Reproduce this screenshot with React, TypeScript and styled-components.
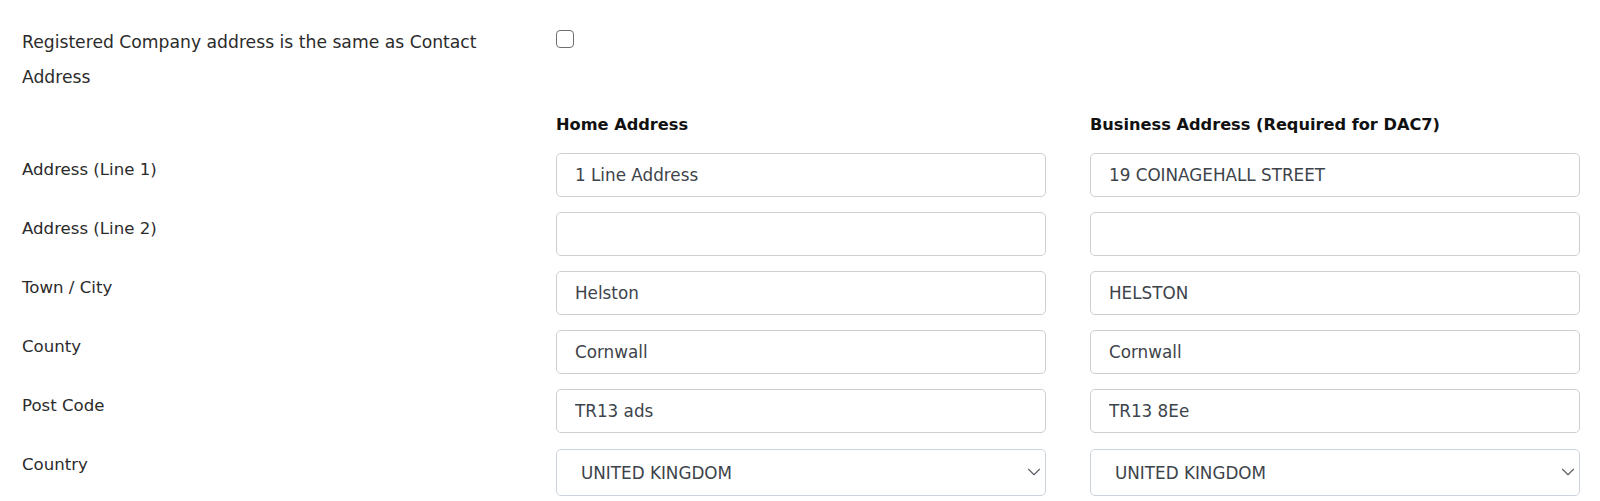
import React from "react";
import styled, { createGlobalStyle } from "styled-components";
import { ChevronDown } from "lucide-react";

const GlobalStyle = createGlobalStyle`
  html, body { margin: 0; padding: 0; background: #ffffff; }
  body { font-family: "DejaVu Sans", "Liberation Sans", sans-serif; color: #212529; }
  * { box-sizing: border-box; }
`;

const Page = styled.div`
  padding: 25px 20px 0 22px;
  width: 1600px;
`;

const Grid = styled.div<{ $rowGap?: number }>`
  display: grid;
  grid-template-columns: 490px 490px 490px;
  column-gap: 44px;
  row-gap: ${(p) => p.$rowGap ?? 0}px;
  align-items: start;
`;

const Label = styled.label<{ $wide?: boolean }>`
  font-size: ${(p) => (p.$wide ? "17.2px" : "16.6px")};
  line-height: ${(p) => (p.$wide ? "34.5px" : "33px")};
  color: #2b2b2b;
  padding-right: 20px;
`;

const CheckCell = styled.div`
  padding-top: 5px;
`;

const Checkbox = styled.input`
  appearance: none;
  -webkit-appearance: none;
  margin: 0;
  width: 18px;
  height: 18px;
  border: 1.5px solid #6f6f6f;
  border-radius: 4px;
  background: #fff;
  display: block;
`;

const Heading = styled.div`
  font-size: 16.2px;
  font-weight: 700;
  line-height: 22px;
  color: #111;
  margin: 20px 0 17px;
`;

const TextInput = styled.input`
  width: 100%;
  height: 44px;
  border: 1px solid #cfcfcf;
  border-radius: 5px;
  padding: 0 18px;
  font-family: inherit;
  font-size: 16.8px;
  color: #3d434a;
  background: #fff;
  outline: none;
`;

const SelectWrap = styled.div`
  position: relative;
  width: 100%;
  margin-top: 1px;
`;

const Select = styled.select`
  appearance: none;
  -webkit-appearance: none;
  width: 100%;
  height: 47px;
  border: 1px solid #cdd3db;
  border-radius: 5px;
  padding: 0 24px;
  font-family: inherit;
  font-size: 16.8px;
  color: #3d434a;
  background: #fff;
  outline: none;
`;

const Chevron = styled(ChevronDown)`
  position: absolute;
  right: 1px;
  top: 12px;
  pointer-events: none;
  color: #5a5f66;
`;

const Empty = styled.div``;

type Row = { label: string; home: string; business: string };

const rows: Row[] = [
  { label: "Address (Line 1)", home: "1 Line Address", business: "19 COINAGEHALL STREET" },
  { label: "Address (Line 2)", home: "", business: "" },
  { label: "Town / City", home: "Helston", business: "HELSTON" },
  { label: "County", home: "Cornwall", business: "Cornwall" },
  { label: "Post Code", home: "TR13 ads", business: "TR13 8Ee" },
];

const CountrySelect: React.FC = () => (
  <SelectWrap>
    <Select defaultValue="GB">
      <option value="GB">UNITED KINGDOM</option>
    </Select>
    <Chevron size={22} strokeWidth={1.2} />
  </SelectWrap>
);

export default function App() {
  return (
    <Page>
      <GlobalStyle />
      <Grid>
        <Label $wide>Registered Company address is the same as Contact Address</Label>
        <CheckCell>
          <Checkbox type="checkbox" />
        </CheckCell>
        <Empty />
      </Grid>
      <Grid>
        <Empty />
        <Heading>Home Address</Heading>
        <Heading>Business Address (Required for DAC7)</Heading>
      </Grid>
      <Grid $rowGap={15}>
        {rows.map((r) => (
          <React.Fragment key={r.label}>
            <Label>{r.label}</Label>
            <TextInput defaultValue={r.home} />
            <TextInput defaultValue={r.business} />
          </React.Fragment>
        ))}
        <Label>Country</Label>
        <CountrySelect />
        <CountrySelect />
      </Grid>
    </Page>
  );
}
